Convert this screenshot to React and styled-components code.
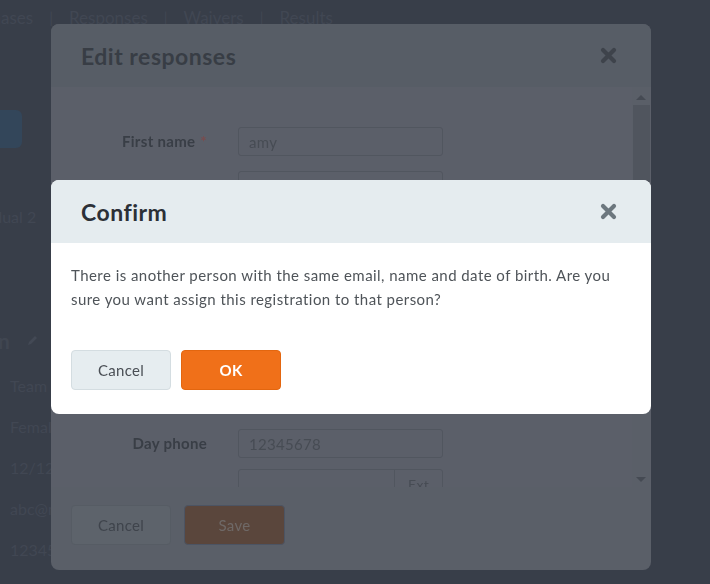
import React from 'react';
import styled, { createGlobalStyle } from 'styled-components';

const GlobalStyle = createGlobalStyle`
	html, body {
		margin: 0;
		padding: 0;
		width: 710px;
		height: 584px;
		overflow: hidden;
		background: #383e49;
		font-family: Lato, 'Liberation Sans', sans-serif;
	}
`;

// page behind both dialogs (already dimmed by the backdrop)
const Page = styled.div`
	width: 710px;
	height: 584px;
	background: #383e49;
	color: #414753;
	overflow: hidden;
`;
const TopNav = styled.nav`
	display: flex;
	align-items: center;
	gap: 16px;
	height: 34px;
	margin-left: -42px;
	font-size: 17px;
	color: #414753;
`;
const NavSep = styled.span`
	font-size: 15px;
`;
const Side = styled.div`
	display: flex;
	flex-direction: column;
	width: 60px;
	padding-top: 76px;
`;
const SideButton = styled.div`
	width: 22px;
	height: 38px;
	border-radius: 0 6px 6px 0;
	background: #33465a;
`;
const SideRow = styled.div`
	margin-top: 57px;
	line-height: 24px;
	margin-left: -45px;
	font-size: 16px;
	white-space: nowrap;
`;
const SideHeading = styled.div`
	margin-top: 99px;
	display: flex;
	align-items: center;
	gap: 16px;
	height: 24px;
	font-size: 21px;
	font-weight: 700;
	margin-left: -2px;
	color: #404651;
`;
const SideList = styled.div`
	display: flex;
	flex-direction: column;
	gap: 18px;
	margin-top: 22px;
	padding-left: 10px;
	font-size: 16px;
	line-height: 23px;
	white-space: nowrap;
`;

const Layer = styled.div`
	position: fixed;
	inset: 0;
	display: flex;
	justify-content: flex-start;
	align-items: flex-start;
	padding: ${(p) => p.$top}px 0 0 51px;
`;

// edit responses dialog (dimmed)
const EditModal = styled.div`
	width: 600px;
	height: 546px;
	border-radius: 8px;
	background: #5a5f68;
	display: flex;
	flex-direction: column;
	overflow: hidden;
`;
const EditHeader = styled.div`
	height: 63px;
	flex-shrink: 0;
	background: #575d66;
	display: flex;
	align-items: center;
	justify-content: space-between;
	padding: 0 34px 0 30px;
`;
const Title = styled.h2`
	margin: 0;
	font-size: 23px;
	font-weight: 700;
	letter-spacing: 0.5px;
	color: ${(p) => p.$color};
`;
const CloseX = styled.button`
	border: 0;
	background: none;
	padding: 0;
	display: flex;
`;
const EditBody = styled.div`
	height: 400px;
	flex-shrink: 0;
	display: flex;
	background: #5b5f69;
`;
const FormArea = styled.div`
	flex: 1;
	padding-top: 40px;
	overflow: hidden;
`;
const FieldRow = styled.div`
	display: grid;
	grid-template-columns: 156px 205px;
	column-gap: 31px;
	align-items: start;
	margin-bottom: ${(p) => p.$gap || 15}px;
`;
const Label = styled.label`
	text-align: right;
	font-size: 15px;
	font-weight: 700;
	letter-spacing: 0.3px;
	color: #393e46;
	line-height: 29px;
`;
const Req = styled.span`
	color: #7a4c4e;
	margin-left: 5px;
`;
const Input = styled.div`
	grid-column: 2;
	height: 29px;
	box-sizing: border-box;
	border: 1px solid #51565f;
	border-radius: 3px;
	padding: 0 10px;
	display: flex;
	align-items: center;
	justify-content: space-between;
	font-size: 15px;
	letter-spacing: 0.3px;
	color: #474c54;
`;
const Addon = styled.span`
	align-self: stretch;
	width: 48px;
	margin-right: -10px;
	border-left: 1px solid #51565f;
	display: flex;
	justify-content: center;
	padding-top: 6px;
	box-sizing: border-box;
	font-size: 14px;
`;
const Spacer = styled.div`
	height: ${(p) => p.$h}px;
`;
const Scrollbar = styled.div`
	width: 18px;
	margin-right: 1px;
	display: flex;
	flex-direction: column;
	align-items: center;
	background: #5a5f68;
`;
const Arrow = styled.div`
	width: 0;
	height: 0;
	margin: 8px 0 5px;
	border-left: 5px solid transparent;
	border-right: 5px solid transparent;
	${(p) => (p.$down ? 'border-top: 5px solid #454a53;' : 'border-bottom: 5px solid #454a53;')}
`;
const Thumb = styled.div`
	width: 17px;
	height: 100px;
	background: #50555e;
`;
const Track = styled.div`
	flex: 1;
`;
const EditFooter = styled.div`
	display: flex;
	align-items: center;
	gap: 13px;
	padding: 18px 20px;
`;

const Button = styled.button`
	width: ${(p) => p.$w || 100}px;
	height: 40px;
	box-sizing: border-box;
	border-radius: 4px;
	font-family: Lato, 'Liberation Sans', sans-serif;
	font-size: 15px;
	letter-spacing: 0.3px;
	border: 1px solid ${(p) => p.$border};
	background: ${(p) => p.$bg};
	color: ${(p) => p.$color};
	font-weight: ${(p) => (p.$bold ? 700 : 400)};
`;

// confirm dialog on top
const ConfirmModal = styled.div`
	width: 600px;
	height: 234px;
	border-radius: 8px;
	background: #fff;
	overflow: hidden;
	display: flex;
	flex-direction: column;
`;
const ConfirmHeader = styled.div`
	height: 63px;
	background: #e5ecef;
	display: flex;
	align-items: center;
	justify-content: space-between;
	padding: 0 34px 0 30px;
`;
const Message = styled.p`
	margin: 20px 20px 0;
	font-size: 15px;
	line-height: 24px;
	letter-spacing: 0.45px;
	color: #4f5459;
`;
const Actions = styled.div`
	display: flex;
	gap: 10px;
	padding: 39px 20px 0;
`;

const XIcon = ({ color }) => (
	<svg width="17" height="17" viewBox="0 0 17 17">
		<path d="M3 3 L14 14 M14 3 L3 14" stroke={color} strokeWidth="4.2" strokeLinecap="round" />
	</svg>
);

const Pencil = () => (
	<svg width="13" height="13" viewBox="0 0 13 13">
		<path d="M2 11 L3 8 L9 2 L11 4 L5 10 Z" fill="#434955" />
	</svg>
);

const App = () => {
	return (
		<>
			<GlobalStyle />
			<Page>
				<TopNav>
					<span>Purchases</span>
					<NavSep>|</NavSep>
					<span>Responses</span>
					<NavSep>|</NavSep>
					<span>Waivers</span>
					<NavSep>|</NavSep>
					<span>Results</span>
				</TopNav>
				<Side>
					<SideButton />
					<SideRow>Individual 2</SideRow>
					<SideHeading>
						<span>n</span>
						<Pencil />
					</SideHeading>
					<SideList>
						<span>Team</span>
						<span>Female</span>
						<span>12/12/1990</span>
						<span>abc@mail.com</span>
						<span>12345678</span>
					</SideList>
				</Side>
			</Page>

			<Layer $top={24}>
				<EditModal>
					<EditHeader>
						<Title $color="#383d45">Edit responses</Title>
						<CloseX>
							<XIcon color="#3e434b" />
						</CloseX>
					</EditHeader>
					<EditBody>
						<FormArea>
							<FieldRow>
								<Label>
									First name<Req>*</Req>
								</Label>
								<Input>amy</Input>
							</FieldRow>
							<FieldRow>
								<Label />
								<Input />
							</FieldRow>
							<Spacer $h={214} />
							<FieldRow $gap={11}>
								<Label>Day phone</Label>
								<Input>12345678</Input>
							</FieldRow>
							<FieldRow>
								<Label />
								<Input>
									<span />
									<Addon>Ext</Addon>
								</Input>
							</FieldRow>
						</FormArea>
						<Scrollbar>
							<Arrow />
							<Thumb />
							<Track />
							<Arrow $down />
						</Scrollbar>
					</EditBody>
					<EditFooter>
						<Button $bg="#5d636b" $border="#565c64" $color="#3f444c">
							Cancel
						</Button>
						<Button $w={101} $bg="#5a463c" $border="#4c5463" $color="#6f6967">
							Save
						</Button>
					</EditFooter>
				</EditModal>
			</Layer>

			<Layer $top={180}>
				<ConfirmModal>
					<ConfirmHeader>
						<Title $color="#2c3037">Confirm</Title>
						<CloseX>
							<XIcon color="#6c777e" />
						</CloseX>
					</ConfirmHeader>
					<Message>
						There is another person with the same email, name and date of birth. Are you sure you want
						assign this registration to that person?
					</Message>
					<Actions>
						<Button $bg="#e6edf0" $border="#d4dde1" $color="#4a4f55">
							Cancel
						</Button>
						<Button $bg="#f07019" $border="#e3660f" $color="#ffffff" $bold>
							OK
						</Button>
					</Actions>
				</ConfirmModal>
			</Layer>
		</>
	);
};

export default App;
